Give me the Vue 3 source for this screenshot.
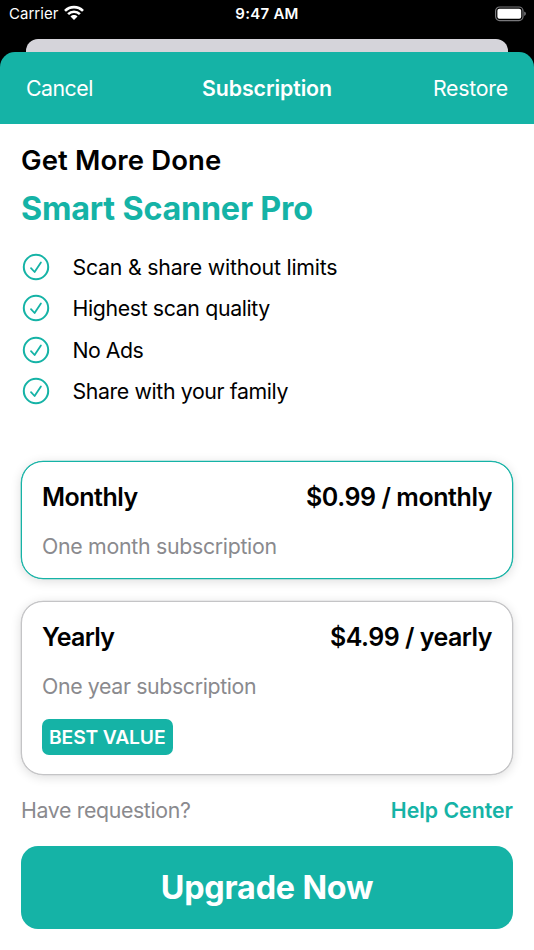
<script setup>
const features = [
  { text: 'Scan & share without limits', cls: 'f-scan' },
  { text: 'Highest scan quality', cls: 'f-tight' },
  { text: 'No Ads', cls: 'f-ads' },
  { text: 'Share with your family', cls: 'f-share' },
]
</script>

<template>
  <main class="screen">
    <div class="top">
      <div class="status">
        <div class="carrier">
          <span>Carrier</span>
          <svg width="20" height="16" viewBox="0 0 20 16">
            <g fill="none" stroke="#fff" stroke-width="2.6">
              <path d="M1 5.9C6 .9 14 .9 19 5.9" />
              <path d="M4.1 9.2C7.4 5.9 12.6 5.9 15.9 9.2" />
            </g>
            <path d="M6.5 11.4C8.5 9.5 11.5 9.5 13.5 11.4L10 15Z" fill="#fff" />
          </svg>
        </div>
        <span class="clock">9:47 AM</span>
        <svg class="battery" width="32" height="16" viewBox="0 0 32 16">
          <rect x=".6" y="1" width="27.4" height="13.6" rx="4" fill="none" stroke="#78787b" stroke-width="1.2" />
          <rect x="2.4" y="2.8" width="23.8" height="10" rx="2" fill="#fff" />
          <path d="M29.2 5.6Q30.9 6.2 30.9 7.8T29.2 10Z" fill="#78787b" />
        </svg>
      </div>
      <div class="behind"></div>
      <header>
        <span class="cancel">Cancel</span>
        <span class="title">Subscription</span>
        <span class="restore">Restore</span>
      </header>
    </div>

    <section class="content">
      <h1>Get More Done</h1>
      <h2>Smart Scanner Pro</h2>
      <ul>
        <li v-for="f in features" :key="f.text">
          <svg width="28" height="28" viewBox="0 0 28 28" fill="none" stroke="#15b3a6" stroke-linecap="round" stroke-linejoin="round">
            <circle cx="14" cy="14" r="12.2" stroke-width="2" />
            <path d="M9 15.2L12.6 19L18.9 9.4" stroke-width="1.8" />
          </svg>
          <span :class="f.cls">{{ f.text }}</span>
        </li>
      </ul>

      <article class="card selected">
        <div class="line"><strong class="monthly">Monthly</strong><strong class="monthly-price">$0.99 / monthly</strong></div>
        <p class="p-month">One month subscription</p>
      </article>
      <article class="card yearly-card">
        <div class="line"><strong class="yearly">Yearly</strong><strong class="yearly-price">$4.99 / yearly</strong></div>
        <p class="f-tight">One year subscription</p>
        <span class="badge">BEST VALUE</span>
      </article>

      <div class="help"><span class="f-tight">Have requestion?</span><a>Help Center</a></div>
      <button>Upgrade Now</button>
    </section>
  </main>
</template>

<style>
body { margin: 0; background: #fff; }
</style>

<style scoped>
.screen { width: 534px; height: 950px; overflow: hidden; background: #fff; color: #000; font: 400 21.3px Inter, sans-serif; white-space: nowrap; }
.top { background: #000; height: 124px; }
.status { height: 27px; margin-bottom: 12px; display: grid; grid-template-columns: 1fr auto 1fr; align-items: center; padding: 0 7px 0 9px; color: #fff; font-size: 15px; box-sizing: border-box; }
.carrier { display: flex; align-items: center; gap: 5.5px; letter-spacing: .03px; }
.carrier svg { margin-top: -1px; }
.clock { font-weight: 600; letter-spacing: .25px; margin-right: 2px; }
.battery { justify-self: end; }
.behind { height: 13px; margin: 0 26px; background: #d5d4da; border-radius: 12px 12px 0 0; }
header { height: 72px; box-sizing: border-box; padding: 0 26px; display: grid; grid-template-columns: 1fr auto 1fr; align-items: center; background: #15b3a6; color: #fff; border-radius: 15px 15px 0 0; }
.cancel { letter-spacing: -.5px; }
.title { font-weight: 600; letter-spacing: -.08px; }
.restore { justify-self: end; letter-spacing: -.22px; }
.content { padding: 12px 21px 0; }
h1, h2 { margin: 0; line-height: 48px; }
h1 { font-size: 27.5px; font-weight: 600; letter-spacing: .12px; }
h2 { font-size: 32.3px; font-weight: 700; letter-spacing: -.2px; color: #15b3a6; line-height: 50px; }
ul { list-style: none; margin: 12.4px 0 0; padding: 0; }
li { height: 41.3px; display: flex; align-items: center; gap: 22.5px; padding-left: 1px; }
.f-scan { letter-spacing: -.22px; }
.f-tight { letter-spacing: -.36px; }
.f-ads { letter-spacing: -.5px; }
.f-share { letter-spacing: -.38px; }
.p-month { letter-spacing: -.29px; }
.card { box-sizing: border-box; border: 1px solid #c4c4c6; border-radius: 22px; padding: 15px 20px 0; background: #fff; box-shadow: 0 0 0 .3px #c4c4c6, 0 2px 11px rgba(0, 0, 0, .14); }
.selected { height: 118px; margin-top: 49.4px; border-color: #15b3a6; box-shadow: 0 0 0 .3px #15b3a6, 0 2px 11px rgba(0, 0, 0, .14); }
.yearly-card { height: 174.5px; margin-top: 22px; }
.line { display: flex; justify-content: space-between; line-height: 40px; font-size: 25px; }
strong { font-weight: 600; }
.monthly { letter-spacing: -.5px; }
.monthly-price { letter-spacing: -.43px; }
.yearly { letter-spacing: -.7px; }
.yearly-price { letter-spacing: -.52px; }
p { margin: 9px 0 0; line-height: 40px; color: #8a8a8e; }
.badge { display: flex; align-items: center; justify-content: center; width: 131.5px; height: 36px; margin: 13px 0 0 -.5px; border-radius: 7px; background: #15b3a6; color: #fff; font-size: 19.3px; font-weight: 600; letter-spacing: -.15px; }
.help { display: flex; justify-content: space-between; line-height: 40px; margin-top: 14.5px; color: #8a8a8e; }
.help a { color: #15b3a6; font-weight: 600; letter-spacing: -.02px; }
button { display: block; width: 100%; height: 82.5px; margin-top: 16.4px; padding: 0; border: 0; border-radius: 17px; background: #15b3a6; color: #fff; font: 700 32.3px Inter, sans-serif; letter-spacing: -.17px; }
</style>
